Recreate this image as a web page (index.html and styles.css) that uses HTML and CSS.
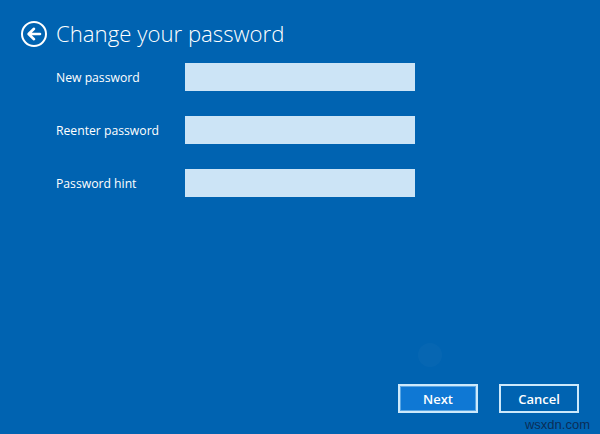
FILE: index.html
```html
<!DOCTYPE html>
<html>
<head>
<meta charset="utf-8">
<link rel="stylesheet" href="styles.css">
</head>
<body>
<div class="page">
  <header class="header">
    <svg class="back" width="28" height="28" viewBox="0 0 28 28">
      <circle cx="14" cy="14" r="12" fill="none" stroke="#fff" stroke-width="2"/>
      <path d="M20 14H9.5M14 8.8L8.6 14L14 19.2" fill="none" stroke="#fff" stroke-width="2.6" stroke-linecap="round" stroke-linejoin="round"/>
    </svg>
    <h1 class="title">Change your password</h1>
  </header>
  <div class="form">
    <div class="row"><span class="label">New password</span><div class="input"></div></div>
    <div class="row"><span class="label">Reenter password</span><div class="input"></div></div>
    <div class="row"><span class="label">Password hint</span><div class="input"></div></div>
  </div>
  <div class="spacer"><div class="ghost"></div></div>
  <div class="actions">
    <button class="btn primary">Next</button>
    <button class="btn">Cancel</button>
  </div>
  <div class="watermark">wsxdn.com</div>
</div>
</body>
</html>
```
FILE: styles.css
```css
html, body {
  margin: 0;
  padding: 0;
  width: 600px;
  height: 434px;
  overflow: hidden;
  background: #0063b1;
}
.page {
  width: 600px;
  height: 434px;
  display: flex;
  flex-direction: column;
  font-family: "Open Sans", "Noto Sans", sans-serif;
  color: #fff;
  position: relative;
}
.header {
  display: flex;
  align-items: center;
  padding: 20px 0 0 20px;
  height: 28px;
}
.back {
  display: block;
  margin-right: 8px;
}
.title {
  margin: 0;
  font-weight: 300;
  font-size: 22.2px;
  line-height: 28px;
}
.form {
  display: flex;
  flex-direction: column;
  gap: 25px;
  padding: 15px 0 0 56px;
}
.row {
  display: flex;
  align-items: center;
  height: 28px;
}
.label {
  width: 129px;
  font-size: 12.2px;
}
.input {
  width: 230px;
  height: 28px;
  background: #cce4f6;
}
.spacer {
  flex: 1;
  position: relative;
}
.ghost {
  position: absolute;
  left: 418px;
  top: 146px;
  width: 24px;
  height: 24px;
  border-radius: 50%;
  background: rgba(255,255,255,0.025);
}
.actions {
  display: flex;
  justify-content: flex-end;
  gap: 21px;
  padding: 0 21px 21px 0;
}
.btn {
  width: 80px;
  height: 29px;
  box-sizing: border-box;
  border: 2px solid #cde9fb;
  background: #0063b1;
  color: #fff;
  font-family: "Open Sans", "Noto Sans", sans-serif;
  font-size: 13px;
  font-weight: 600;
  padding: 0;
}
.primary {
  background: #0f78d4;
  box-shadow: inset 0 0 0 1px #5aa6e4;
}
.watermark {
  position: absolute;
  right: 10px;
  bottom: 2px;
  font-family: "Liberation Sans", Arial, sans-serif;
  font-size: 13px;
  color: #0b2e57;
}
```
